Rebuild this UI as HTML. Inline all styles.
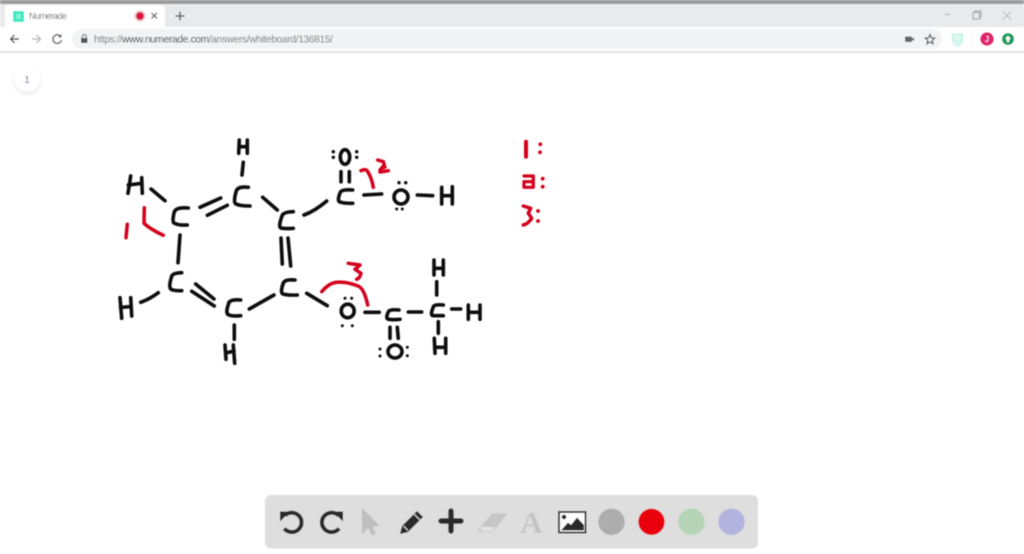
<!DOCTYPE html>
<html>
<head>
<meta charset="utf-8">
<title>Numerade</title>
<style>
html,body{margin:0;padding:0;background:#fff;width:1024px;height:554px;overflow:hidden}
svg{display:block;position:absolute;left:0;top:0}
text{font-family:"Liberation Sans",sans-serif}
</style>
</head>
<body>
<svg width="1024" height="554" viewBox="0 0 1024 554" xmlns="http://www.w3.org/2000/svg">
<defs>
<filter id="b" x="-5%" y="-5%" width="110%" height="110%"><feGaussianBlur stdDeviation="0.55"/></filter>
<filter id="s" x="-50%" y="-50%" width="200%" height="200%"><feDropShadow dx="0" dy="2" stdDeviation="2.500" flood-color="#000" flood-opacity="0.12"/></filter>
</defs>
<rect width="1024" height="554" fill="#fff"/>
<g filter="url(#b)">
<!-- browser chrome -->
<rect width="1024" height="4" fill="#9a9a9a"/>
<rect y="4" width="1024" height="23" fill="#e8eaeb"/>
<path d="M5 27V9q0-4 4-4H161q4 0 4 4V27Z" fill="#fff"/>
<rect y="27" width="1024" height="24" fill="#fff"/>
<rect y="51" width="1024" height="2" fill="#e2e2e2"/>
<rect x="72" y="29" width="870" height="20" rx="10" fill="#f1f3f4"/>
<rect x="13" y="11" width="11" height="11" rx="1.500" fill="#3fe9c2"/>
<rect x="16.500" y="14" width="4" height="5" fill="#8cf0d8"/>
<text x="29" y="19" font-size="9" fill="#777" textLength="38" lengthAdjust="spacing">Numerade</text>
<circle cx="140" cy="16" r="4" fill="#d8173c"/>
<circle cx="140" cy="16" r="5" fill="none" stroke="#e8b4be" stroke-width="1"/>
<path d="M151.500 13L157 18.500M157 13L151.500 18.500" stroke="#666" stroke-width="1.300"/>
<path d="M180 11.500V20.500M175.500 16H184.500" stroke="#666" stroke-width="1.500"/>
<path d="M19 39H11M14.500 35L10.500 39L14.500 43" fill="none" stroke="#555" stroke-width="1.400"/>
<path d="M32 39H40M36.500 35L40.500 39L36.500 43" fill="none" stroke="#bdbdbd" stroke-width="1.400"/>
<path d="M60.500 36.200A4.300 4.300 0 1 0 61.500 40" fill="none" stroke="#555" stroke-width="1.400"/>
<path d="M61.500 34V37.500H58Z" fill="#555"/>
<rect x="81" y="38" width="6.500" height="5" rx="1" fill="#555"/>
<path d="M82.300 38V36.500a2 2 0 0 1 4 0V38" fill="none" stroke="#555" stroke-width="1"/>
<text x="94" y="42.600" font-size="10.200" fill="#777" textLength="239" lengthAdjust="spacing">https://<tspan fill="#333">www.numerade.com</tspan>/answers/whiteboard/136815/</text>
<rect x="905" y="36.500" width="7" height="5.500" rx="1" fill="#666"/>
<path d="M912 38.500L914 37.500V41L912 40Z" fill="#666"/>
<path d="M930 34.500L931.400 37.800L934.800 38.100L932.200 40.300L933 43.700L930 41.900L927 43.700L927.800 40.300L925.200 38.100L928.600 37.800Z" fill="none" stroke="#555" stroke-width="1.200"/>
<rect x="952.500" y="34" width="10" height="8" rx="1" fill="#d8f8f0" stroke="#b0f0e0" stroke-width="1"/>
<path d="M953 44H962M955 46H960" stroke="#bdf3e6" stroke-width="1.200"/>
<path d="M972 35V44" stroke="#edf2f2" stroke-width="1"/>
<circle cx="987" cy="39" r="6.800" fill="#e0246f"/>
<text x="987" y="42" font-size="8" fill="#fff" text-anchor="middle">J</text>
<circle cx="1008" cy="39" r="6" fill="#109d58"/>
<path d="M1008 35.500L1011 39H1009.300V42H1006.700V39H1005Z" fill="#fff"/>
<path d="M945 14.500H950" stroke="#aaa" stroke-width="1"/>
<rect x="973" y="12.500" width="6.500" height="6.500" fill="none" stroke="#999" stroke-width="1"/>
<path d="M975 12V11H981V17H980" fill="none" stroke="#999" stroke-width="1"/>
<path d="M1003 11.500L1011 19.500M1011 11.500L1003 19.500" stroke="#bbb" stroke-width="1"/>
<!-- page badge -->
<circle cx="27" cy="79" r="12.500" fill="#fff" filter="url(#s)"/>
<text x="27" y="83" font-size="10" fill="#6e6e9e" text-anchor="middle">1</text>

<!-- black handwriting -->
<g fill="none" stroke="#0c0c0c" stroke-width="3.600" stroke-linecap="round" stroke-linejoin="round">
<path d="M130.700 176L128 193.300M141.700 177.700L142.300 193.300M128.300 185L141.700 183.300"/>
<path d="M151 189L165 200.700"/>
<path d="M188.300 208Q175 207 174 213Q172 222 174 223Q178 225.500 187.300 225"/>
<path d="M200 207.300L220.700 198M207.300 215.300L227.300 205.300"/>
<path d="M248.300 187.300Q237 186 236 192Q233 203 236 204Q240 206 250 206"/>
<path d="M239.300 140L238.700 153.300M247.300 140V153.300M239 146.700H247.300"/>
<path d="M243.300 162.300L242 175"/>
<path d="M262.700 197.300L277.300 210"/>
<path d="M293.300 211.700Q283 212 282 216Q278 227 281 228Q285 229 293.300 228.300"/>
<path d="M180 235L178 262.700"/>
<path d="M281 238L282.300 264M288 238L290.700 266"/>
<path d="M181.700 272.700Q172 273 171.500 277Q168 288 171.500 289.500Q175 291 181.700 290.700"/>
<path d="M195.700 284L214 299M191.700 291.300L214.300 306"/>
<path d="M240.700 300Q229 299 228.500 304Q225 314 229 315Q233 316.500 240.700 315.700"/>
<path d="M120 297.700L121.700 318.300M130.700 297.700L131.700 316M120.500 307.500L131 306.500"/>
<path d="M140.700 302.300Q150 299 158.300 292.700"/>
<path d="M234.300 325V339.300"/>
<path d="M225 345L226 359.300M233.300 345L234.700 363.300M226 353L234 351"/>
<path d="M249.300 309L274 295"/>
<path d="M295 280Q284 279 283 284Q280 293 283 294Q288 295.500 297.300 295"/>
<path d="M304 215Q315 211 326.700 201"/>
<path d="M352.700 190Q341 189 340 193Q337 201 340 202Q344 203.500 352.700 203.300"/>
<path d="M341 171.700V181.700M349.300 171.700V181.700"/>
<ellipse cx="345" cy="157" rx="4.700" ry="7.300"/>
<path d="M364 195L381.700 194"/>
<ellipse cx="401" cy="197" rx="7" ry="7"/>
<path d="M417.300 195L432.700 195.700"/>
<path d="M441.700 187.300V204M452.300 186.700V204M442 195.700H452"/>
<path d="M306.700 293.300L327.300 305.700"/>
<ellipse cx="347.700" cy="311" rx="6.500" ry="6.800"/>
<path d="M365 312.300H379.300"/>
<path d="M399 310Q389 309 388.300 312Q385 319 389 319.300Q393 320 400 319.300"/>
<path d="M390 327.300V338.300M397.300 327.300L398.300 338.300"/>
<ellipse cx="395" cy="351.500" rx="7" ry="6.500"/>
<path d="M408.300 312H421.700"/>
<path d="M443.300 305Q434 304 433.300 307Q430 315 433 315.700H443.300"/>
<path d="M434 260V275M443.300 260V275M434 268.300H443.300"/>
<path d="M436.700 281.700V295"/>
<path d="M438.300 321.700V333.300"/>
<path d="M434.300 338.300L435 353.300M445.700 338.300V353.300M435 347.300H445.700"/>
<path d="M451.700 309H460.700"/>
<path d="M468.300 305V319.300M480 305V319.300M468.300 312.300H480"/>
</g>
<g fill="#0c0c0c">
<circle cx="333.300" cy="151.700" r="1.700"/><circle cx="333.300" cy="157.300" r="1.700"/>
<circle cx="356.700" cy="151.700" r="1.700"/><circle cx="356.700" cy="157.300" r="1.700"/>
<circle cx="399" cy="182.700" r="1.700"/><circle cx="405.700" cy="182.700" r="1.700"/>
<circle cx="396.700" cy="209" r="1.500"/><circle cx="402.300" cy="209" r="1.500"/>
<circle cx="345" cy="298.300" r="1.500"/><circle cx="351.700" cy="298.300" r="1.500"/>
<circle cx="342.300" cy="325.700" r="1.500"/><circle cx="352.300" cy="325.700" r="1.500"/>
<circle cx="380" cy="349" r="1.500"/><circle cx="380" cy="356" r="1.500"/>
<circle cx="407.300" cy="347.300" r="1.500"/><circle cx="407.300" cy="355.700" r="1.500"/>
</g>

<!-- red handwriting -->
<g fill="none" stroke="#d4001f" stroke-width="3.500" stroke-linecap="round" stroke-linejoin="round">
<path d="M127.300 224.300L126 237.700"/>
<path d="M144.300 207.700L144 223.300Q150 229 163.300 235.300"/>
<path d="M361 170.700Q366 168 368 172Q372 179 373.300 187.300"/>
<path d="M377.700 160L383.300 161.700L384.300 165L380 170V172L388.300 170.700M382 168L385 167"/>
<path d="M321.700 291.700Q328 284 335 282.500Q345 281 358 286Q364 288 367.700 305"/>
<path d="M348.300 263.300L360 265L355 269.300L361 273.300Q360 278 356.700 279.300"/>
<path d="M526 141.700V156.700" stroke-width="4"/>
<path d="M524 176H533.300V187.300H524V181.700H531.700" stroke-width="3.200"/>
<path d="M523.300 206L530.700 208.300L528.300 213.300L531.700 218.300Q528 224 523.300 225"/>
</g>
<g fill="#d4001f">
<circle cx="540.300" cy="144.300" r="1.900"/><circle cx="540" cy="152.300" r="1.900"/>
<circle cx="542.700" cy="178.700" r="1.900"/><circle cx="542.700" cy="186.700" r="1.900"/>
<circle cx="538" cy="211" r="1.900"/><circle cx="538" cy="221" r="1.900"/>
</g>

<!-- toolbar -->
<rect x="265" y="495" width="493" height="53.500" rx="6" fill="#dedede"/>
<g fill="none" stroke="#2a2a2a" stroke-width="4">
<path d="M285 515.500A9.700 9.700 0 1 1 284.300 528.500"/>
<path d="M338.400 515.500A9.700 9.700 0 1 0 339.100 528.500"/>
</g>
<path d="M280 511.500H290L280 521.500Z" fill="#2a2a2a"/>
<path d="M343 511.500H333L343 521.500Z" fill="#2a2a2a"/>
<path d="M362 508L380 526L372.500 526.500L376 534L372 535.500L368.500 528L362 534Z" fill="#bfbfbf"/>
<path d="M400 534L402 526L417 511L423 517L408 532Z" fill="#2a2a2a"/>
<path d="M403.500 526L408 530.500M414 514L420 520" stroke="#dedede" stroke-width="1"/>
<path d="M451 511V531M441 521H461" stroke="#2a2a2a" stroke-width="5.400" stroke-linecap="round"/>
<path d="M478 530L492 513.500H507L497 527L491 532H482Z" fill="#c6c6c6"/>
<path d="M480 527H495L491 531H482Z" fill="#e4e4e4"/>
<text x="531.500" y="533" font-size="31" fill="#c4c4c4" text-anchor="middle" style='font-family:"Liberation Serif",serif;font-weight:bold'>A</text>
<rect x="559" y="512" width="26.500" height="20.500" fill="#fff" stroke="#2a2a2a" stroke-width="1.800"/>
<circle cx="564" cy="517" r="2.300" fill="#2a2a2a"/>
<path d="M561 530.500L568 522.500L571 525L577 517.500L584 525V530.500Z" fill="#2a2a2a"/>
<circle cx="611.500" cy="521.800" r="13.200" fill="#adadad"/>
<circle cx="651.500" cy="521.800" r="13.200" fill="#e8000f"/>
<circle cx="691.500" cy="521.800" r="13.200" fill="#b5d3b5"/>
<circle cx="731.500" cy="521.800" r="13.200" fill="#b3b3e0"/>
</g>
</svg>
</body>
</html>
